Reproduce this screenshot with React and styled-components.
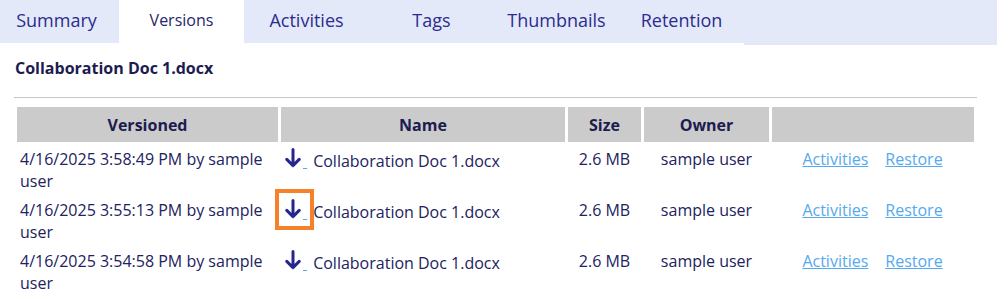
import React from "react";
import styled, { createGlobalStyle } from "styled-components";

const Global = createGlobalStyle`
  html, body { margin: 0; padding: 0; background: #ffffff; }
  body { font-family: "Open Sans", "Noto Sans", sans-serif; color: #222260; }
`;

const Page = styled.div`
  width: 998px;
`;

const TabStrip = styled.nav`
  display: flex;
  align-items: flex-start;
  margin-right: 1px;
`;

const Tab = styled.div`
  width: ${(p) => (p.$first ? "119px" : "125px")};
  padding-right: ${(p) => (p.$first ? "6px" : "0")};
  box-sizing: border-box;
  height: 43px;
  display: flex;
  align-items: center;
  justify-content: center;
  background: ${(p) => (p.$active ? "#ffffff" : "#e3e9f8")};
  color: ${(p) => (p.$active ? "#26266c" : "#2c2c8e")};
  font-size: ${(p) => (p.$active ? "16px" : "18px")};
  padding-bottom: 4px;
`;

const TabFiller = styled.div`
  flex: 1;
  height: 45px;
  background: #e3e9f8;
`;

const Content = styled.div`
  padding: 12px 21px 0 14px;
`;

const Title = styled.h2`
  margin: 0 0 0 1px;
  font-size: 16px;
  line-height: 22px;
  font-weight: 700;
  color: #1c1c50;
`;

const Rule = styled.hr`
  border: 0;
  height: 1px;
  background: #c6c6c6;
  margin: 18px 0 6px;
`;

const Table = styled.table`
  width: 963px;
  table-layout: fixed;
  border-collapse: separate;
  border-spacing: 3px;
  font-size: 16px;
`;

const Th = styled.th`
  background: #cbcbcb;
  height: 35px;
  padding: 0 3px;
  box-sizing: border-box;
  font-weight: 700;
  color: #1c1c50;
  text-align: center;
  vertical-align: middle;
  line-height: 22px;
`;

const Td = styled.td`
  padding: 3px 3px 1px;
  vertical-align: top;
  line-height: 22px;
  text-align: ${(p) => p.$align || "left"};
  color: #222260;
`;

const DownloadLink = styled.a`
  position: relative;
  color: #55a9ee;
  text-decoration: underline;
  margin-left: 1px;
  margin-right: 6px;
`;

const ArrowSvg = styled.svg`
  vertical-align: -1px;
  margin-right: 2px;
`;

const Highlight = styled.span`
  position: absolute;
  left: -10px;
  right: -7px;
  top: -12px;
  bottom: -7px;
  border: 4px solid #f5822a;
  pointer-events: none;
`;

const Actions = styled.div`
  display: flex;
  justify-content: center;
  gap: 17px;
  padding-right: 1px;
`;

const ActionLink = styled.a`
  color: #55a9ee;
  text-decoration: underline;
`;

const ArrowDown = () => (
  <ArrowSvg width="16" height="20" viewBox="0 0 16 20" aria-hidden="true">
    <path
      d="M8 1.5 V17.5 M1.8 11.4 L8 17.6 L14.2 11.4"
      fill="none"
      stroke="#26268f"
      strokeWidth="3"
      strokeLinecap="round"
      strokeLinejoin="round"
    />
  </ArrowSvg>
);

const rows = [
  { when: "4/16/2025 3:58:49 PM by sample user" },
  { when: "4/16/2025 3:55:13 PM by sample user", focus: true },
  { when: "4/16/2025 3:54:58 PM by sample user" },
];

const tabs = ["Summary", "Versions", "Activities", "Tags", "Thumbnails", "Retention"];

export default function App() {
  return (
    <Page>
      <Global />
      <TabStrip>
        {tabs.map((t, i) => (
          <Tab key={t} $first={i === 0} $active={t === "Versions"}>
            {t}
          </Tab>
        ))}
        <TabFiller />
      </TabStrip>
      <Content>
        <Title>Collaboration Doc 1.docx</Title>
        <Rule />
        <Table>
          <thead>
            <tr>
              <Th style={{ width: 261 }}>Versioned</Th>
              <Th style={{ width: 284 }}>Name</Th>
              <Th style={{ width: 73 }}>Size</Th>
              <Th style={{ width: 125 }}>Owner</Th>
              <Th style={{ width: 202 }}></Th>
            </tr>
          </thead>
          <tbody>
            {rows.map((r, i) => (
              <tr key={i}>
                <Td>{r.when}</Td>
                <Td>
                  <DownloadLink href="#">
                    <ArrowDown />
                    {"\u00a0"}
                    {r.focus && <Highlight />}
                  </DownloadLink>
                  Collaboration Doc 1.docx
                </Td>
                <Td $align="center">2.6 MB</Td>
                <Td $align="center">sample user</Td>
                <Td>
                  <Actions>
                    <ActionLink href="#">Activities</ActionLink>
                    <ActionLink href="#">Restore</ActionLink>
                  </Actions>
                </Td>
              </tr>
            ))}
          </tbody>
        </Table>
      </Content>
    </Page>
  );
}
